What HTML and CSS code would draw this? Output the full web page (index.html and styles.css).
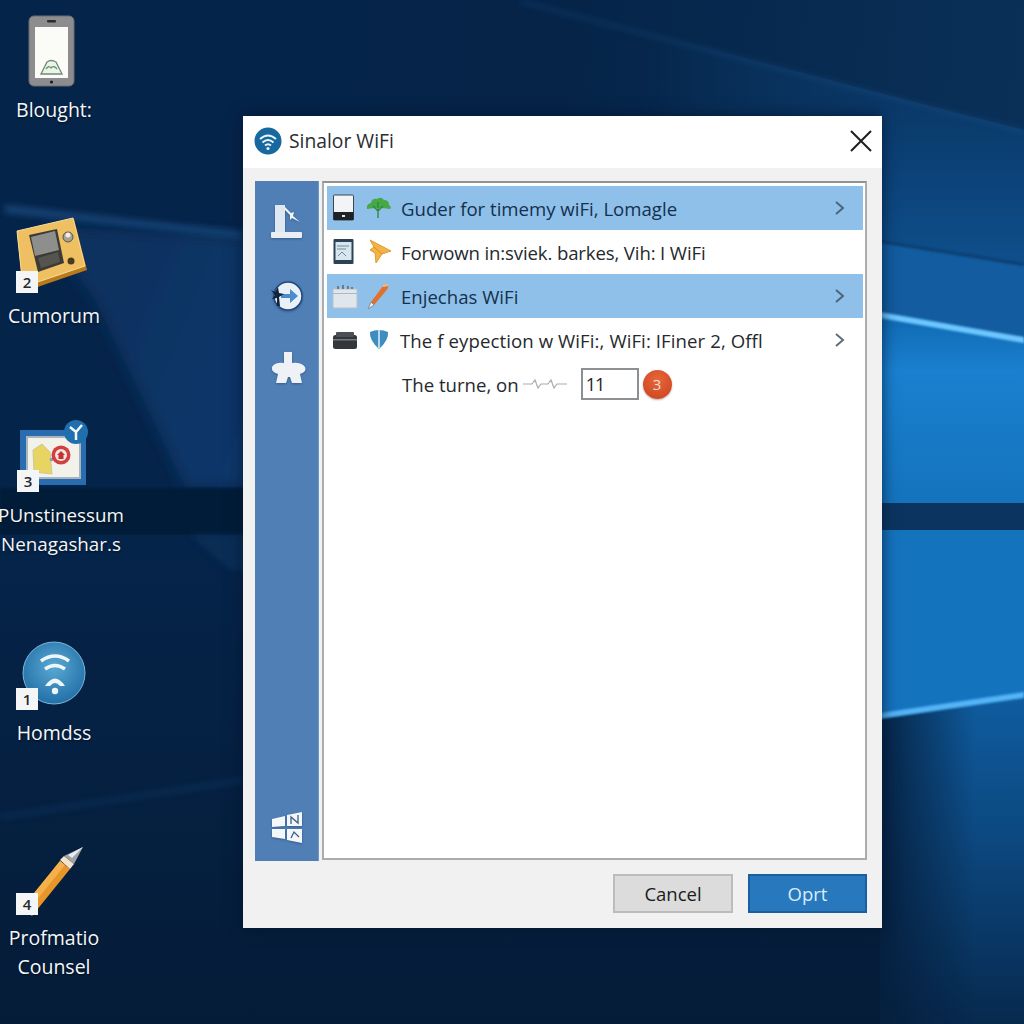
FILE: index.html
```html
<!DOCTYPE html>
<html lang="en">
<head>
<meta charset="utf-8">
<title>Sinalor WiFi</title>
<link rel="stylesheet" href="styles.css">
</head>
<body>
<div class="desktop">
  <svg class="wallpaper" viewBox="0 0 1024 1024" aria-hidden="true">
    <defs>
      <linearGradient id="base" x1="0" y1="0" x2="1" y2="0.1">
        <stop offset="0" stop-color="#05244a"/>
        <stop offset="0.55" stop-color="#052448"/>
        <stop offset="1" stop-color="#0a3058"/>
      </linearGradient>
      <linearGradient id="rightUpper" x1="0" y1="0" x2="0" y2="1">
        <stop offset="0" stop-color="#1069b2"/>
        <stop offset="0.3" stop-color="#1a80cf"/>
        <stop offset="1" stop-color="#1473bd"/>
      </linearGradient>
      <linearGradient id="rightTop" x1="0" y1="0" x2="0" y2="1">
        <stop offset="0" stop-color="#0a3766"/>
        <stop offset="1" stop-color="#0e4f8c"/>
      </linearGradient>
      <linearGradient id="rightLow" x1="0" y1="0" x2="0" y2="1">
        <stop offset="0" stop-color="#0f5c9f"/>
        <stop offset="0.45" stop-color="#0c477e"/>
        <stop offset="1" stop-color="#07294e"/>
      </linearGradient>
      <linearGradient id="wedge" x1="0" y1="0" x2="1" y2="0.4">
        <stop offset="0" stop-color="#07305c"/>
        <stop offset="1" stop-color="#0a376a"/>
      </linearGradient>
      <linearGradient id="leftLow" x1="0" y1="0" x2="0" y2="1">
        <stop offset="0" stop-color="#05244a"/>
        <stop offset="1" stop-color="#051c38"/>
      </linearGradient>
      <linearGradient id="topFade" gradientUnits="userSpaceOnUse" x1="640" y1="0" x2="880" y2="0">
        <stop offset="0" stop-color="#0a3766" stop-opacity="0"/>
        <stop offset="1" stop-color="#0a3766"/>
      </linearGradient>
      <linearGradient id="lowFade" gradientUnits="userSpaceOnUse" x1="880" y1="0" x2="975" y2="0">
        <stop offset="0" stop-color="#051e3c"/>
        <stop offset="1" stop-color="#051e3c" stop-opacity="0"/>
      </linearGradient>
      <filter id="soft"><feGaussianBlur stdDeviation="3"/></filter>
      <filter id="softer"><feGaussianBlur stdDeviation="1.2"/></filter>
      <filter id="softest"><feGaussianBlur stdDeviation="7"/></filter>
    </defs>
    <rect width="1024" height="1024" fill="url(#base)"/>
    <polygon points="40,226 300,240 300,487 185,487 95,300" fill="url(#wedge)" filter="url(#softest)"/>
    <rect x="0" y="488" width="880" height="47" fill="#041b37" filter="url(#softer)"/>
    <rect x="0" y="535" width="880" height="489" fill="url(#leftLow)"/>
    <polygon points="190,535 300,535 300,570 230,570" fill="#08305c" opacity="0.7" filter="url(#soft)"/>
    <polygon points="640,31 880,93 880,116 640,116" fill="url(#topFade)"/>
    <polygon points="880,93 1024,130 1024,265 880,242" fill="url(#rightTop)"/>
    <polygon points="880,242 1024,265 1024,340 880,315" fill="#125c9f"/>
    <polygon points="880,315 1024,340 1024,503 880,503" fill="url(#rightUpper)"/>
    <rect x="880" y="503" width="144" height="27" fill="#0b3560"/>
    <polygon points="880,530 1024,530 1024,695 880,716" fill="#1473bd"/>
    <polygon points="880,716 1024,695 1024,1024 880,1024" fill="url(#rightLow)"/>
    <polygon points="880,716 975,703 975,1024 880,1024" fill="url(#lowFade)" opacity="0.9"/>
    <polygon points="5,205 245,232 245,238 5,213" fill="#2a64a0" opacity="0.5" filter="url(#soft)"/>
    <polygon points="0,815 245,778 245,782 0,819" fill="#1c4f82" opacity="0.35" filter="url(#soft)"/>
    <polygon points="520,0 1024,130 1024,133 520,3" fill="#2a6aa5" opacity="0.3" filter="url(#soft)"/>
    <polygon points="880,312 1024,337 1024,343 880,318" fill="#6cc6ff" filter="url(#softer)"/>
    <polygon points="880,713 1024,692 1024,698 880,719" fill="#52b4f6" filter="url(#softer)"/>
    <polygon points="880,240 1024,263 1024,266 880,243" fill="#0b3f72" filter="url(#softer)"/>
  </svg>

  <div class="desk-item item-phone">
    <div class="desk-icon">
      <svg class="desk-svg" viewBox="0 0 80 80" aria-hidden="true">
        <rect x="15" y="2" width="45" height="70" rx="5" fill="#8d8d8f" stroke="#6d6d70"/>
        <rect x="21" y="13" width="33" height="51" fill="#fbfbf8"/>
        <rect x="33" y="6" width="9" height="2.5" rx="1" fill="#2c2c2e"/>
        <circle cx="37.500" cy="68" r="1.600" fill="#1d1d1f"/>
        <path d="M27 60 L33 48 Q37 45 42 48 L48 60 Z" fill="#eef3e8" stroke="#6f8a7a" stroke-width="1.300"/>
        <path d="M32 55 q3 -4 5 -1 q3 -3 6 1" fill="none" stroke="#5d9a78" stroke-width="1.300"/>
      </svg>
    </div>
    <div class="desk-label">Blought:</div>
  </div>

  <div class="desk-item item-gold">
    <div class="desk-icon">
      <svg class="desk-svg" viewBox="0 0 80 80" aria-hidden="true">
        <polygon points="3,13 60,-1 73,50 9,72" fill="#b87a1a"/>
        <polygon points="3,11 59,-2 71,46 9,67" fill="#eec062" stroke="#f8dc9a"/>
        <polygon points="15,15 43,9 50,43 24,52" fill="#3b3a36"/>
        <polygon points="17,17 41,11 45,30 21,36" fill="#8e8e8c"/>
        <polygon points="24,38 44,32 46,42 27,48" fill="#55544f"/>
        <circle cx="54" cy="17" r="5" fill="#a6a295" stroke="#5a5346"/>
        <circle cx="54" cy="15" r="2.500" fill="#f0eee6"/>
        <circle cx="57" cy="41" r="3.500" fill="#4a3a1e"/>
      </svg>
      <span class="num-badge">2</span>
    </div>
    <div class="desk-label">Cumorum</div>
  </div>

  <div class="desk-item item-frame">
    <div class="desk-icon">
      <svg class="desk-svg" viewBox="0 0 80 80" aria-hidden="true">
        <rect x="0" y="10" width="66" height="55" fill="#2a6cb0"/>
        <rect x="7" y="17" width="53" height="41" fill="#f2f1ea" stroke="#a9b4bd" stroke-width="2"/>
        <path d="M13 30 L22 24 L30 32 L32 54 L14 52 Z" fill="#e8d460" stroke="#cfc89a"/>
        <path d="M30 40 L36 38" stroke="#8f9bb5" stroke-width="3"/>
        <circle cx="41" cy="35" r="9.500" fill="#d33f3f"/>
        <circle cx="41" cy="35" r="6" fill="#efe7e2"/>
        <path d="M37 35 L41 31 L45 35 M38.500 35 V39 H43.500 V35" fill="#c8302f"/>
        <circle cx="56" cy="12" r="12" fill="#1f6fae"/>
        <path d="M50 7 L56 12 L62 5 M56 12 V20" fill="none" stroke="#f2f6f8" stroke-width="2.500"/>
      </svg>
      <span class="num-badge badge-frame">3</span>
    </div>
    <div class="desk-label">PUnstinessum<br>Nenagashar.s</div>
  </div>

  <div class="desk-item item-wifi">
    <div class="desk-icon">
      <svg class="desk-svg" viewBox="0 0 80 80" aria-hidden="true">
        <defs>
          <radialGradient id="wifiFill" cx="0.5" cy="0.4" r="0.65">
            <stop offset="0" stop-color="#5aa9d3"/>
            <stop offset="1" stop-color="#1d6ba3"/>
          </radialGradient>
        </defs>
        <circle cx="40" cy="36" r="31" fill="url(#wifiFill)" stroke="#7cb6d8"/>
        <path d="M27 24 Q41 14 55 24" fill="none" stroke="#eef6fa" stroke-width="3.500"/>
        <path d="M31 32 Q41 25 51 32" fill="none" stroke="#eef6fa" stroke-width="3.500"/>
        <path d="M31 49 Q41 34 51 49 L46 49 Q41 43 36 49 Z" fill="#eef6fa"/>
        <circle cx="41" cy="54" r="3.200" fill="#eef6fa"/>
      </svg>
      <span class="num-badge">1</span>
    </div>
    <div class="desk-label">Homdss</div>
  </div>

  <div class="desk-item item-pencil">
    <div class="desk-icon">
      <svg class="desk-svg" viewBox="0 0 80 80" aria-hidden="true">
        <polygon points="8,66 46,19 56,27 18,74" fill="#e8962a"/>
        <polygon points="46,19 51,23 13,70 8,66" fill="#f4b04a"/>
        <polygon points="46,18 50,14 60,22 56,27" fill="#f3e5cb"/>
        <polygon points="50,14 69,5 60,22" fill="#9ea3a7"/>
        <polygon points="54,13 69,5 58,16" fill="#e9ecee"/>
      </svg>
      <span class="num-badge">4</span>
    </div>
    <div class="desk-label">Profmatio<br>Counsel</div>
  </div>

  <section class="dialog">
    <header class="titlebar">
      <svg class="title-icon" viewBox="0 0 28 28" aria-hidden="true">
        <circle cx="14" cy="14" r="13.500" fill="#16689f"/>
        <path d="M6 12 Q14 5 22 12" fill="none" stroke="#eaf5fb" stroke-width="2"/>
        <path d="M8.500 15.500 Q14 10.500 19.500 15.500" fill="none" stroke="#eaf5fb" stroke-width="2"/>
        <path d="M11 18.500 Q14 16 17 18.500" fill="none" stroke="#eaf5fb" stroke-width="2"/>
        <circle cx="14" cy="21.500" r="1.600" fill="#eaf5fb"/>
      </svg>
      <span class="title-text">Sinalor WiFi</span>
      <svg class="close-icon" viewBox="0 0 22 22" aria-hidden="true">
        <path d="M1 1 L21 21 M21 1 L1 21" fill="none" stroke="#1e1e1e" stroke-width="2"/>
      </svg>
    </header>

    <div class="dialog-body">
      <nav class="sidebar">
        <svg class="side-icon" viewBox="0 0 40 40" aria-hidden="true">
          <rect x="8" y="3" width="10" height="27" fill="#dfe8f1"/>
          <rect x="4" y="30" width="31" height="6" rx="1" fill="#e9eef4"/>
          <path d="M18 5 L24 11 L27 10 L26 14 L33 20 L25 16 L23 18 L23 13 L18 8 Z" fill="#f2f5f8"/>
        </svg>
        <svg class="side-icon" viewBox="0 0 40 40" aria-hidden="true">
          <circle cx="21" cy="21" r="14" fill="#e9f0f7" stroke="#22497a" stroke-width="1.500"/>
          <path d="M14 19 H23 V14 L31 21 L23 28 V23 H14 Z" fill="#4c8ccb"/>
          <path d="M4 15 L8 17 L11 12 L12 18 L17 19 L12 22 L13 31 L10 31 L10 23 L5 24 L8 20 Z" fill="#10243c"/>
        </svg>
        <svg class="side-icon" viewBox="0 0 40 40" aria-hidden="true">
          <path d="M17 4 H25 V15 Q34 14 38 19 Q40 24 33 26 L35 35 H25 L23 29 H21 L19 35 H9 L11 26 Q4 24 5 19 Q8 14 17 15 Z" fill="#eef2f6"/>
        </svg>
        <svg class="side-icon side-icon-last" viewBox="0 0 40 40" aria-hidden="true">
          <polygon points="5,12 18,9 18,19 5,20" fill="#f4f7fa"/>
          <polygon points="20,8 35,5 35,19 20,19" fill="#f4f7fa"/>
          <polygon points="5,22 18,22 18,32 5,30" fill="#f4f7fa"/>
          <polygon points="20,22 35,22 35,36 20,33" fill="#f4f7fa"/>
          <path d="M24 17 V10 L31 16 V8 M24 31 L27 25 L32 30" fill="none" stroke="#3d5f85" stroke-width="1.300"/>
        </svg>
      </nav>

      <main class="panel">
        <div class="row row-active">
          <svg class="row-icon-a" viewBox="0 0 26 28" aria-hidden="true">
            <rect x="1.500" y="1" width="20" height="25" rx="1" fill="#f3f4f5" stroke="#3d4650"/>
            <rect x="1.500" y="18" width="20" height="8" fill="#1f2328"/>
            <rect x="10" y="21" width="3" height="2" fill="#e8e8e8"/>
          </svg>
          <svg class="row-icon-b" viewBox="0 0 28 28" aria-hidden="true">
            <path d="M3 15 Q2 10 7 9 Q8 4 13 5 Q17 2 20 6 Q25 6 25 11 Q28 13 26 15 Q14 13 3 15 Z" fill="#46a948"/>
            <path d="M14 8 V24 M9 12 L14 17 L19 12" fill="none" stroke="#2f8a38" stroke-width="1.400"/>
          </svg>
          <span class="row-text">Guder for timemy wiFi, Lomagle</span>
          <svg class="chevron" viewBox="0 0 12 16" aria-hidden="true"><path d="M2 2 L9 8 L2 14" fill="none" stroke="#4e6477" stroke-width="2"/></svg>
        </div>
        <div class="row row-snug">
          <svg class="row-icon-a" viewBox="0 0 26 28" aria-hidden="true">
            <rect x="1.500" y="1" width="20" height="25" rx="1" fill="#2d4257"/>
            <rect x="3.500" y="4" width="16" height="18" fill="#d8e6ee"/>
            <path d="M5 8 H17 M5 11 H14 M6 18 L10 14 L14 18" stroke="#6d8ba0" fill="none"/>
          </svg>
          <svg class="row-icon-b" viewBox="0 0 28 28" aria-hidden="true">
            <path d="M6 2 L27 13 L18 16 L12 25 L11 15 L6 12 L10 9 Z" fill="#f0b545" stroke="#e09a35"/>
            <path d="M10 9 L18 16" stroke="#d98d2a"/>
          </svg>
          <span class="row-text">Forwown in:sviek. barkes, Vih: I WiFi</span>
        </div>
        <div class="row row-active">
          <svg class="row-icon-a" viewBox="0 0 26 28" aria-hidden="true">
            <rect x="1" y="7" width="24" height="19" rx="1" fill="#dfe6ec" stroke="#b7c2cc"/>
            <path d="M6 7 V4 M11 7 V3 M16 7 V4 M20 7 V5" stroke="#5b6670" stroke-width="1.500"/>
            <rect x="1" y="11" width="24" height="1" fill="#aeb9c3"/>
          </svg>
          <svg class="row-icon-b" viewBox="0 0 28 28" aria-hidden="true">
            <path d="M7 20 L19 4 Q23 1 24 3 Q25 6 21 10 L10 23 Z" fill="#e2702b"/>
            <path d="M19 4 L24 3" stroke="#f3b98b" stroke-width="2"/>
            <path d="M7 20 L4 27 L10 23 Z" fill="#eceff2" stroke="#8a8f96"/>
          </svg>
          <span class="row-text">Enjechas WiFi</span>
          <svg class="chevron" viewBox="0 0 12 16" aria-hidden="true"><path d="M2 2 L9 8 L2 14" fill="none" stroke="#4e6477" stroke-width="2"/></svg>
        </div>
        <div class="row row-tight">
          <svg class="row-icon-a" viewBox="0 0 26 28" aria-hidden="true">
            <rect x="1" y="9" width="24" height="14" rx="2.500" fill="#33363a"/>
            <rect x="4" y="6" width="18" height="5" rx="1" fill="#4c5055"/>
            <rect x="1" y="13" width="24" height="1.500" fill="#777b80"/>
          </svg>
          <svg class="row-icon-b" viewBox="0 0 28 28" aria-hidden="true">
            <path d="M6 6 Q15 2 24 6 Q25 14 15 23 Q5 14 6 6 Z" fill="#3d8dc0"/>
            <path d="M15 4 V22" stroke="#e3f0f7" stroke-width="1.500"/>
          </svg>
          <span class="row-text">The f eypection w WiFi:, WiFi: IFiner 2, Offl</span>
          <svg class="chevron" viewBox="0 0 12 16" aria-hidden="true"><path d="M2 2 L9 8 L2 14" fill="none" stroke="#5f6e7a" stroke-width="2"/></svg>
        </div>
        <div class="row row-field">
          <span class="row-text">The turne, on</span>
          <svg class="squiggle" viewBox="0 0 44 12" aria-hidden="true">
            <path d="M0 6 H9 L12 2 L15 10 L18 6 H25 L28 2 L31 10 L34 6 H44" fill="none" stroke="#a8adb2" stroke-width="1.200"/>
          </svg>
          <span class="value-box">11</span>
          <span class="count-badge">3</span>
        </div>
      </main>
    </div>

    <footer class="actions">
      <button class="btn btn-cancel" type="button">Cancel</button>
      <button class="btn btn-primary" type="button">Oprt</button>
    </footer>
  </section>
</div>
</body>
</html>
```

FILE: styles.css
```css
* { box-sizing: border-box; }

html, body {
  margin: 0;
  padding: 0;
}

body {
  width: 1024px;
  height: 1024px;
  overflow: hidden;
  font-family: "Open Sans", "Noto Sans", "Liberation Sans", sans-serif;
}

.desktop {
  position: relative;
  width: 1024px;
  height: 1024px;
  overflow: hidden;
  background: #05234a;
}

.wallpaper {
  position: absolute;
  left: 0;
  top: 0;
  width: 1024px;
  height: 1024px;
  display: block;
}

/* Desktop shortcuts */
.desk-item {
  position: absolute;
  width: 130px;
  display: flex;
  flex-direction: column;
  align-items: center;
}

.item-phone { left: -11px; top: 14px; }
.item-gold { left: -11px; top: 220px; }
.item-frame { left: -4px; top: 420px; }
.item-wifi { left: -11px; top: 637px; }
.item-pencil { left: -11px; top: 842px; }

.desk-icon {
  position: relative;
  width: 80px;
  height: 80px;
}

.item-frame .desk-icon {
  margin-left: -2px;
}

.desk-svg {
  display: block;
  width: 80px;
  height: 80px;
  overflow: visible;
}

.desk-label {
  margin-top: 1px;
  color: #f4f7fa;
  font-size: 19.5px;
  line-height: 29px;
  text-align: center;
  white-space: nowrap;
  text-shadow: 0 1px 2px rgba(0, 0, 0, 0.6);
}

.item-frame .desk-label {
  font-size: 18.8px;
}

.num-badge {
  position: absolute;
  left: 2px;
  top: 51px;
  width: 22px;
  height: 22px;
  background: #f4f5f6;
  color: #26282b;
  font-size: 15px;
  font-weight: 600;
  line-height: 22px;
  text-align: center;
}

.badge-frame {
  left: -3px;
  top: 50px;
}

/* Dialog */
.dialog {
  position: absolute;
  left: 243px;
  top: 116px;
  width: 639px;
  height: 812px;
  display: flex;
  flex-direction: column;
  background: #f1f1f1;
  box-shadow: 0 0 14px rgba(2, 18, 44, 0.7);
}

.titlebar {
  height: 52px;
  flex: none;
  display: flex;
  align-items: center;
  padding: 0 10px 2px 11px;
  background: #ffffff;
}

.title-icon {
  width: 28px;
  height: 28px;
  flex: none;
}

.title-text {
  margin: 0 0 2px 7px;
  color: #2a2d30;
  font-size: 19.3px;
}

.close-icon {
  width: 22px;
  height: 22px;
  margin-left: auto;
}

.dialog-body {
  height: 693px;
  flex: none;
  display: flex;
  gap: 3px;
  padding: 13px 15px 0 12px;
}

.sidebar {
  width: 64px;
  flex: none;
  display: flex;
  flex-direction: column;
  align-items: center;
  gap: 33px;
  padding: 21px 0 14px;
  background: #4f7fb5;
  border-right: 1px solid #6f97c3;
}

.side-icon {
  width: 40px;
  height: 40px;
  flex: none;
  filter: drop-shadow(0 1px 1px rgba(30, 60, 100, 0.5));
}

.side-icon-last {
  margin-top: auto;
}

.panel {
  flex: 1;
  height: 679px;
  padding: 3px 2px 0 3px;
  background: #ffffff;
  border: 2px solid #a9adb0;
  border-top-color: #8f9396;
}

.row {
  height: 44px;
  display: flex;
  align-items: center;
  padding: 0 17px 0 5px;
  color: #25292d;
}

.row-active {
  background: #8fc0ea;
  color: #14304d;
}

.row-field {
  padding-left: 75px;
  color: #25292d;
}

.row-icon-a {
  width: 26px;
  height: 28px;
  flex: none;
}

.row-icon-b {
  width: 28px;
  height: 28px;
  flex: none;
  margin-left: 6px;
}

.row-text {
  margin-left: 9px;
  font-size: 18.6px;
  white-space: nowrap;
}

.row-snug .row-text {
  letter-spacing: -0.135px;
}

.row-tight .row-text {
  margin-left: 8px;
  letter-spacing: 0.09px;
}

.row-field .row-text {
  margin-left: 0;
}

.chevron {
  width: 12px;
  height: 16px;
  flex: none;
  margin-left: auto;
}

.squiggle {
  width: 44px;
  height: 12px;
  flex: none;
  margin-left: 4px;
}

.value-box {
  width: 58px;
  height: 32px;
  flex: none;
  margin-left: 14px;
  padding-left: 3px;
  border: 2px solid #8d9093;
  background: #ffffff;
  color: #1e1e1e;
  font-size: 18px;
  letter-spacing: -1px;
  line-height: 28px;
}

.count-badge {
  width: 29px;
  height: 29px;
  flex: none;
  margin-left: 4px;
  border-radius: 50%;
  background: radial-gradient(circle at 50% 35%, #e8673a, #c9401f);
  box-shadow: 0 1px 2px rgba(0, 0, 0, 0.3);
  color: #f6ded3;
  font-size: 15px;
  line-height: 29px;
  text-align: center;
}

.actions {
  flex: 1;
  display: flex;
  justify-content: flex-end;
  gap: 15px;
  padding: 13px 15px 0 0;
}

.btn {
  height: 39px;
  padding: 0;
  font-family: inherit;
  font-size: 18.5px;
}

.btn-cancel {
  width: 120px;
  background: #dcdcdc;
  border: 2px solid #bcbcbc;
  color: #1a1a1a;
}

.btn-primary {
  width: 119px;
  background: #2778bd;
  border: 2px solid #1a5f9e;
  color: #d9ecfa;
}
```
